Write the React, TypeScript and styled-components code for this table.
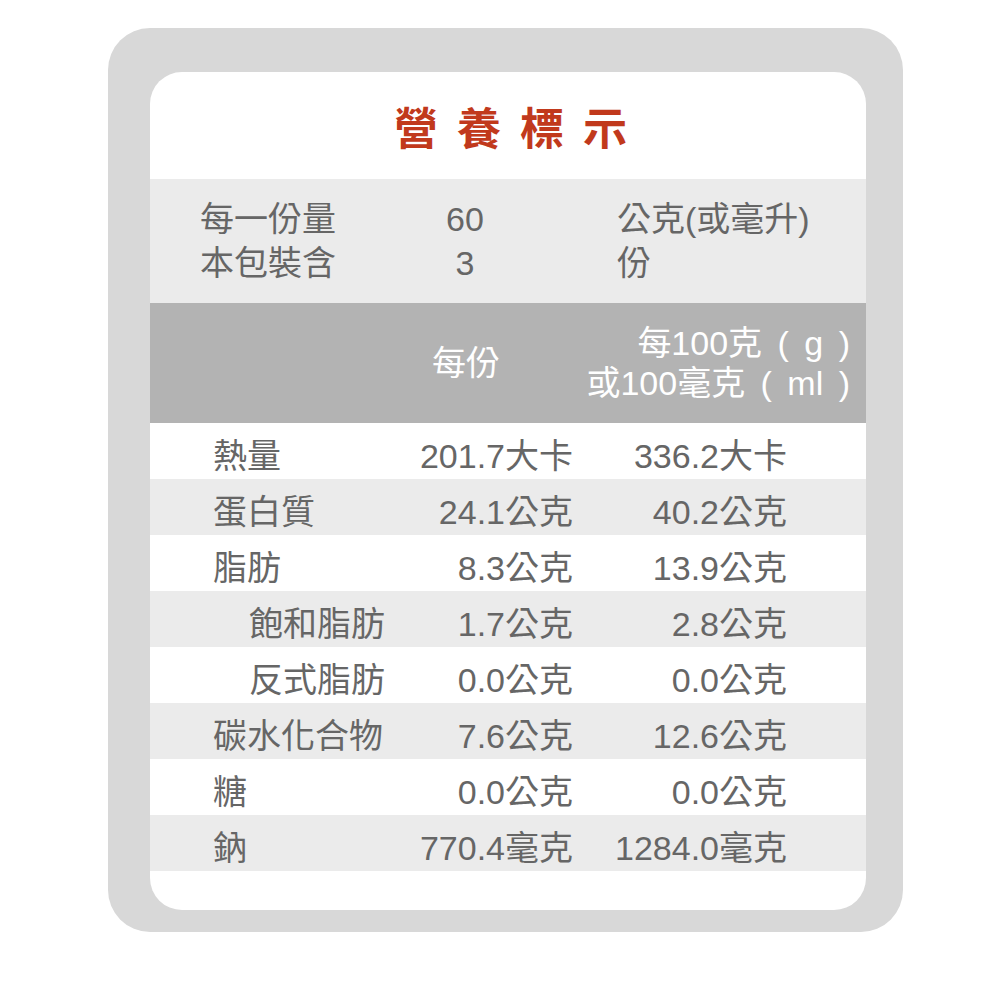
import React, { FC } from 'react';
import styled, { createGlobalStyle } from 'styled-components';

type Nutrient = {
  name: string;
  perServing: string;
  per100: string;
  sub?: boolean;
};

const nutrients: Nutrient[] = [
  { name: '熱量', perServing: '201.7大卡', per100: '336.2大卡' },
  { name: '蛋白質', perServing: '24.1公克', per100: '40.2公克' },
  { name: '脂肪', perServing: '8.3公克', per100: '13.9公克' },
  { name: '飽和脂肪', perServing: '1.7公克', per100: '2.8公克', sub: true },
  { name: '反式脂肪', perServing: '0.0公克', per100: '0.0公克', sub: true },
  { name: '碳水化合物', perServing: '7.6公克', per100: '12.6公克' },
  { name: '糖', perServing: '0.0公克', per100: '0.0公克' },
  { name: '鈉', perServing: '770.4毫克', per100: '1284.0毫克' },
];

const GlobalStyle = createGlobalStyle`
  html, body {
    margin: 0;
    padding: 0;
    background: #ffffff;
  }
  body {
    font-family: "Liberation Sans", "Noto Sans CJK TC", sans-serif;
  }
`;

const Page = styled.div`
  padding: 28px 0 0 108px;
`;

const Frame = styled.div`
  box-sizing: border-box;
  width: 795px;
  height: 904px;
  padding: 44px 37px 22px 42px;
  background: #d8d8d8;
  border-radius: 42px;
`;

const Card = styled.div`
  display: flex;
  flex-direction: column;
  width: 716px;
  height: 838px;
  background: #ffffff;
  border-radius: 32px;
  overflow: hidden;
  color: #666666;
  font-size: 34px;
`;

const Title = styled.h1`
  display: flex;
  align-items: center;
  justify-content: center;
  height: 107px;
  margin: 0;
  padding-left: 24px;
  font-family: "Noto Sans CJK TC", sans-serif;
  font-size: 44px;
  font-weight: 700;
  letter-spacing: 19px;
  color: #c1391c;
`;

const Serving = styled.div`
  display: grid;
  grid-template-columns: 230px 70px 1fr;
  align-content: center;
  height: 124px;
  padding-left: 50px;
  background: #ebebeb;
  line-height: 44px;
`;

const ServingValue = styled.span`
  text-align: center;
`;

const ServingUnit = styled.span`
  padding-left: 117px;
`;

const Header = styled.div`
  display: grid;
  grid-template-columns: 282px 68px 1fr;
  align-items: center;
  height: 120px;
  padding-right: 16px;
  background: #b3b3b3;
  color: #ffffff;
`;

const HeaderCell = styled.div<{ $right?: boolean }>`
  grid-column: ${p => (p.$right ? 3 : 2)};
  text-align: ${p => (p.$right ? 'right' : 'center')};
  line-height: 40px;
  white-space: nowrap;
  word-spacing: ${p => (p.$right ? '6px' : '0')};
`;

const Rows = styled.div`
  display: flex;
  flex-direction: column;
`;

const Row = styled.div<{ $shaded: boolean }>`
  box-sizing: border-box;
  display: grid;
  grid-template-columns: 177px 183px 214px 1fr;
  height: 56px;
  padding: 5px 0 0 63px;
  line-height: 56px;
  background: ${p => (p.$shaded ? '#ebebeb' : '#ffffff')};
`;

const Name = styled.span<{ $sub?: boolean }>`
  padding-left: ${p => (p.$sub ? '36px' : '0')};
  white-space: nowrap;
`;

const Amount = styled.span`
  text-align: right;
  white-space: nowrap;
`;

const App: FC = () => (
  <Page>
    <GlobalStyle />
    <Frame>
      <Card>
        <Title>營養標示</Title>
        <Serving>
          <span>每一份量</span>
          <ServingValue>60</ServingValue>
          <ServingUnit>公克(或毫升)</ServingUnit>
          <span>本包裝含</span>
          <ServingValue>3</ServingValue>
          <ServingUnit>份</ServingUnit>
        </Serving>
        <Header>
          <HeaderCell>每份</HeaderCell>
          <HeaderCell $right>
            每100克 ( g )
            <br />
            或100毫克 ( ml )
          </HeaderCell>
        </Header>
        <Rows>
          {nutrients.map((n, i) => (
            <Row key={n.name} $shaded={i % 2 === 1}>
              <Name $sub={n.sub}>{n.name}</Name>
              <Amount>{n.perServing}</Amount>
              <Amount>{n.per100}</Amount>
            </Row>
          ))}
        </Rows>
      </Card>
    </Frame>
  </Page>
);

export default App;
